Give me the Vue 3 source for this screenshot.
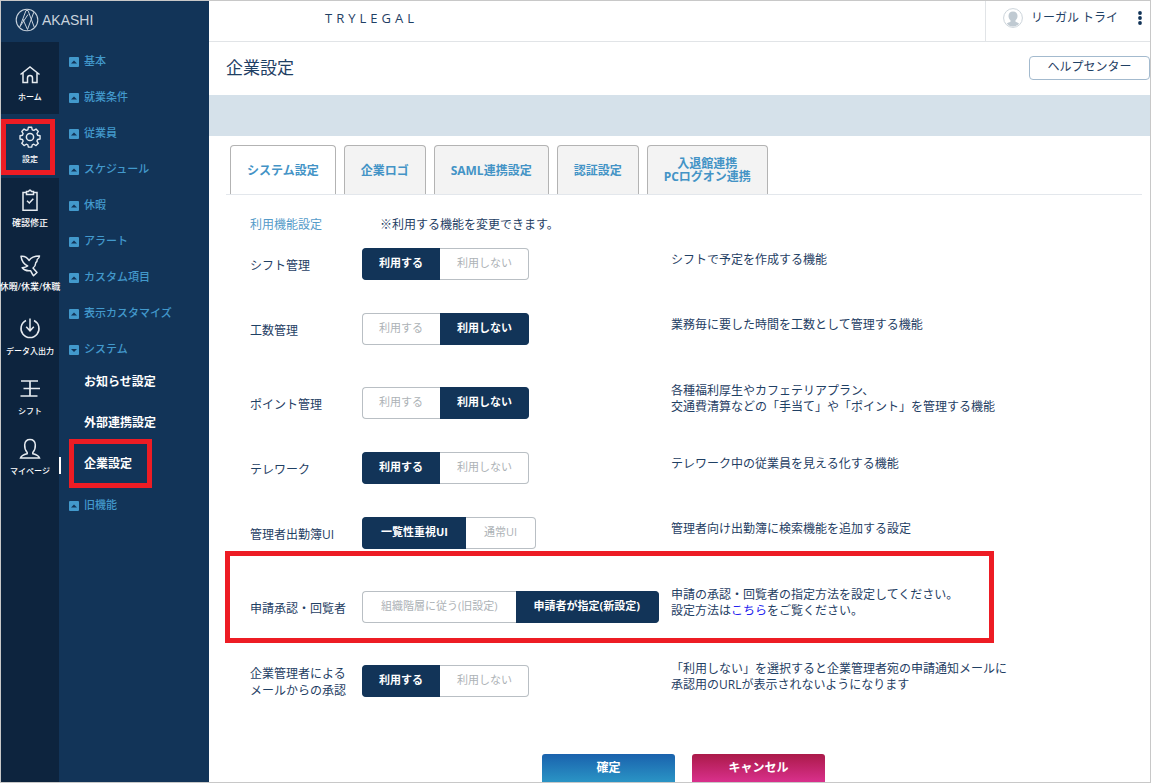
<script setup>
import { ref, reactive } from 'vue'

const rail = [
  { id: 'home', label: 'ホーム' },
  { id: 'gear', label: '設定', active: true },
  { id: 'check', label: '確認修正', wide: true },
  { id: 'bird', label: '休暇/休業/休職', wide: true },
  { id: 'data', label: 'データ入出力', compact: true },
  { id: 'shift', label: 'シフト', compact: true },
  { id: 'person', label: 'マイページ', compact: true },
]

const menu = [
  { label: '基本' },
  { label: '就業条件' },
  { label: '従業員' },
  { label: 'スケジュール' },
  { label: '休暇' },
  { label: 'アラート' },
  { label: 'カスタム項目' },
  { label: '表示カスタマイズ' },
  { label: 'システム', children: ['お知らせ設定', '外部連携設定', '企業設定'] },
  { label: '旧機能' },
]

const tabs = [['システム設定'], ['企業ロゴ'], ['SAML連携設定'], ['認証設定'], ['入退館連携', 'PCログオン連携']]
const currentTab = ref(0)

const rows = reactive([
  { label: ['シフト管理'], options: ['利用する', '利用しない'], value: 0, desc: ['シフトで予定を作成する機能'] },
  { label: ['工数管理'], options: ['利用する', '利用しない'], value: 1, desc: ['業務毎に要した時間を工数として管理する機能'], tall: true },
  { label: ['ポイント管理'], options: ['利用する', '利用しない'], value: 1, desc: ['各種福利厚生やカフェテリアプラン、', '交通費清算などの「手当て」や「ポイント」を管理する機能'] },
  { label: ['テレワーク'], options: ['利用する', '利用しない'], value: 0, desc: ['テレワーク中の従業員を見える化する機能'] },
  { label: ['管理者出勤簿UI'], options: ['一覧性重視UI', '通常UI'], value: 0, desc: ['管理者向け出勤簿に検索機能を追加する設定'], tall: true, roomy: true },
  { label: ['申請承認・回覧者'], options: ['組織階層に従う(旧設定)', '申請者が指定(新設定)'], value: 1, desc: ['申請の承認・回覧者の指定方法を設定してください。'], link: true, tall: true, roomy: true, marked: true },
  { label: ['企業管理者による', 'メールからの承認'], options: ['利用する', '利用しない'], value: 0, desc: ['「利用しない」を選択すると企業管理者宛の申請通知メールに', '承認用のURLが表示されないようになります'] },
])
</script>

<template>
  <div class="app">
    <aside class="side">
      <a class="brand" href="#">
        <svg width="24" height="24" viewBox="0 0 24 24" fill="none" stroke="#c9d3dd" stroke-width="1.1">
          <circle cx="12" cy="12" r="10.8" />
          <path d="M4.500 19.800 11 2.500h2l6.500 17.300M7.800 11l4.700 10.500 6.300-17.300M5 18.500l8-12" stroke-width="1" />
        </svg>
        <span>AKASHI</span>
      </a>
      <div class="navs">
        <nav class="rail">
          <a v-for="r in rail" :key="r.id" href="#" class="rail-item" :class="[r.id, { active: r.active, compact: r.compact, wide: r.wide }]">
            <svg width="24" height="24" viewBox="0 0 24 24" fill="none" stroke="#e6ebf0" stroke-width="1.5">
              <path v-if="r.id === 'home'" d="M2.500 11.500 12 4l9.500 7.500M5 10v9.500h4.500V15a2.500 2.500 0 0 1 5 0v4.500H19V10" />
              <template v-else-if="r.id === 'gear'">
                <path d="M10.200 2.500h3.600l.6 2.700 1.700.7 2.400-1.500 2.500 2.600-1.500 2.300.7 1.800 2.700.6v3.500l-2.700.6-.7 1.700 1.500 2.400-2.500 2.500-2.400-1.500-1.700.7-.6 2.400h-3.600l-.6-2.400-1.700-.7-2.400 1.500L3 19.900l1.500-2.400-.7-1.700-2.700-.6v-3.500l2.700-.6.7-1.800L3 7l2.500-2.600 2.400 1.500 1.700-.7z" transform="translate(1 0) scale(.92)" stroke-linejoin="round" />
                <circle cx="12" cy="12" r="3.600" />
              </template>
              <template v-else-if="r.id === 'check'">
                <path d="M8.500 3.500H5v17.800h14V3.500h-3.500" /><path d="M8.500 5.500V2.500h2L11.500 1.200h1l1 1.300h2v3zM9 11.800l2.300 2.200 4-4.300" />
              </template>
              <path v-else-if="r.id === 'bird'" d="M3 3.200c4.500-.4 6.500 1.300 8 4.300 1.800-2.800 4.800-4.500 10.500-4.500-.3 2-1 2.700-2.200 3.300 0 1.700-.6 2.700-1.500 3.400-.2 2.500-1 4-2.800 5.300l4 4.500-3.500 3.200c-1.300-1.300-2-3.500-3-5-3.700.5-6.500-.7-8.300-3 2-.1 4.200-.6 5.500-1.700C6.500 11.500 3.500 7.500 3 3.200z" stroke-linejoin="round" />
              <path v-else-if="r.id === 'data'" d="M8 3.500a9 9 0 1 0 8 0M12 1.500v12M8.200 9.800l3.800 4 3.800-4" />
              <path v-else-if="r.id === 'shift'" d="M3 4h17M5.500 11.500H22M2.500 19h17M12 4v15" stroke-width="1.700" />
              <path v-else d="M9.200 15.500C7.300 13.500 6.500 11 6.700 7.800 7 4.500 9 2.500 12 2.500s5 2 5.300 5.300c.2 3.200-.6 5.700-2.500 7.700v1.200c2.500.6 5.700 1.300 6.700 4.300h-19c1-3 4.200-3.700 6.700-4.300z" />
            </svg>
            <span>{{ r.label }}</span>
            <i v-if="r.active" class="mark mark-rail"></i>
          </a>
        </nav>
        <nav class="menu">
          <ul>
            <li v-for="m in menu" :key="m.label">
              <a href="#" class="menu-link">
                <svg width="10" height="10" viewBox="0 0 10 10">
                  <rect width="10" height="10" rx="1" fill="#4299cc" />
                  <path :d="m.children ? 'M2 4h6L5 7z' : 'M2 6.500h6L5 3.500z'" fill="#123458" />
                </svg>
                {{ m.label }}
              </a>
              <ul v-if="m.children" class="sub">
                <li v-for="c in m.children" :key="c" :class="{ current: c === '企業設定' }">
                  <a href="#">{{ c }}</a>
                  <i v-if="c === '企業設定'" class="mark mark-menu"></i>
                </li>
              </ul>
            </li>
          </ul>
        </nav>
      </div>
    </aside>

    <main class="main">
      <header class="top">
        <span class="company">TRYLEGAL</span>
        <div class="user">
          <svg width="20" height="20" viewBox="0 0 20 20">
            <circle cx="10" cy="10" r="9.400" fill="#fff" stroke="#ccd4da" />
            <path d="M10 3.500c-2.900 0-4.500 1.900-4.500 4.500 0 1.900.8 3.400 2 4.300v1.400c-1.300.6-2.700.9-3.700 2A8.500 8.500 0 0 0 10 18.500a8.500 8.500 0 0 0 6.200-2.800c-1-1.100-2.400-1.400-3.700-2v-1.400c1.200-.9 2-2.400 2-4.300 0-2.600-1.600-4.500-4.500-4.500z" fill="#c0cad2" />
          </svg>
          <span class="name">リーガル トライ</span>
          <button class="more" aria-label="メニュー">
            <svg width="4" height="16" viewBox="0 0 4 16" fill="#123458"><circle cx="2" cy="3" r="1.900" /><circle cx="2" cy="8" r="1.900" /><circle cx="2" cy="13" r="1.900" /></svg>
          </button>
        </div>
      </header>
      <div class="title">
        <h1>企業設定</h1>
        <button class="help">ヘルプセンター</button>
      </div>
      <div class="band"></div>
      <div class="tabs" role="tablist">
        <button v-for="(t, i) in tabs" :key="i" role="tab" :aria-selected="currentTab === i" :class="{ on: currentTab === i }" @click="currentTab = i">
          <span v-for="l in t" :key="l">{{ l }}</span>
        </button>
      </div>
      <section class="settings">
        <div class="intro">
          <h2>利用機能設定</h2>
          <p>※利用する機能を変更できます。</p>
        </div>
        <div v-for="(row, n) in rows" :key="n" class="row" :class="{ tall: row.tall, roomy: row.roomy }">
          <div :id="'label-' + n" class="label"><span v-for="l in row.label" :key="l">{{ l }}</span></div>
          <div class="seg" role="group" :aria-labelledby="'label-' + n">
            <button v-for="(o, i) in row.options" :key="o" :aria-pressed="row.value === i" :class="{ on: row.value === i }" @click="row.value = i">{{ o }}</button>
          </div>
          <div class="desc">
            <span v-for="d in row.desc" :key="d">{{ d }}</span>
            <span v-if="row.link">設定方法は<a href="#">こちら</a>をご覧ください。</span>
          </div>
          <i v-if="row.marked" class="mark mark-row"></i>
        </div>
      </section>
      <div class="actions">
        <button class="ok">確定</button>
        <button class="cancel">キャンセル</button>
      </div>
    </main>
  </div>
</template>

<style>
body { margin: 0; }
</style>

<style scoped>
* { box-sizing: border-box; }
.app {
  display: flex;
  min-height: 100vh;
  border: 1px solid #c8c8c8;
  background: #fff;
  color: #1f4064;
  font: 12px/16px "Open Sans", "Noto Sans CJK JP", sans-serif;
}
button { margin: 0; padding: 0; font: inherit; color: inherit; cursor: pointer; }
a { color: inherit; text-decoration: none; }
ul { list-style: none; margin: 0; padding: 0; }
h1, h2, p { margin: 0; font-weight: 400; }
.mark { position: absolute; border: 5px solid #ed1c24; pointer-events: none; }

.side { display: flex; flex-direction: column; flex: none; width: 208px; background: #123458; }
.brand {
  display: flex; align-items: center; gap: 3px; height: 41px; padding: 0 14px 3px;
  color: #c9d3dd; font: 14px/20px "Liberation Sans", sans-serif;
}
.navs { display: flex; flex: 1; }
.rail { flex: none; width: 58px; background: #0d243e; }
.rail-item {
  position: relative; display: flex; flex-direction: column; align-items: center; gap: 4px;
  height: 64px; padding-top: 11px; color: #fff; font-size: 8px; line-height: 12px; font-weight: 500; white-space: nowrap;
}
.rail-item svg { flex: none; }
.rail-item.home { height: 72px; padding-top: 21px; }
.rail-item.compact { height: 60px; }
.rail-item.wide { font-size: 9px; }
.rail-item.active { background: #123458; }
.mark-rail { top: 5px; left: 0; width: 54px; height: 56px; }

.menu { flex: 1; padding: 11px 0 0 10px; color: #4299cc; font-size: 11px; font-weight: 500; }
.menu > ul { display: flex; flex-direction: column; gap: 20px; }
.menu-link { display: flex; align-items: center; gap: 5px; }
.menu-link svg { margin-top: 2px; }
.sub { display: flex; flex-direction: column; gap: 25px; padding: 17px 0 5px 15px; color: #fff; font-size: 12px; font-weight: 700; }
.sub li { position: relative; }
.current::before { content: ""; position: absolute; left: -25px; top: 1px; width: 2px; height: 17px; background: #fff; }
.mark-menu { top: -17px; left: -15px; width: 83px; height: 49px; }

.main { flex: 1; min-width: 0; }
.top { display: flex; justify-content: space-between; height: 41px; border-bottom: 1px solid #e1e4e7; }
.company { padding: 9px 0 0 116px; font-size: 13px; letter-spacing: 4px; }
.user { display: flex; align-items: center; gap: 8px; padding: 0 8px 6px 17px; border-left: 1px solid #e1e4e7; }
.more { display: flex; margin-left: 12px; border: 0; background: none; }
.title { display: flex; align-items: center; justify-content: space-between; height: 53px; padding: 0 0 1px 17px; }
h1 { font-size: 17px; line-height: 24px; }
.help { width: 121px; height: 24px; padding-bottom: 2px; border: 1px solid #a3bace; border-radius: 4px; background: #fff; }
.band { height: 41px; background: #d5e1ea; }
.tabs { display: flex; gap: 8px; margin: 9px 8px 0 17px; padding-left: 4px; border-bottom: 1px solid #e3e7ec; }
.tabs button {
  display: flex; flex-direction: column; align-items: center; justify-content: center; height: 49px; padding: 0 16px;
  border: 1px solid #b3b3b3; border-bottom: 0; border-radius: 4px 4px 0 0; background: #f3f3f3;
  color: #4393c6; font-weight: 700; line-height: 13px; white-space: nowrap;
}
.tabs button.on { background: #fff; }
.settings { padding: 21px 0 0 41px; }
.intro, .row { display: grid; grid-template-columns: 112px 309px 1fr; align-items: start; }
.intro { margin-bottom: 14px; line-height: 18px; }
.intro h2 { color: #559bc9; font-size: 12px; }
.intro p { padding-left: 18px; }
.row { position: relative; min-height: 65px; white-space: nowrap; }
.row.tall { min-height: 74px; }
.label, .desc { display: flex; flex-direction: column; justify-content: center; }
.label { height: 34px; line-height: 17px; }
.desc { height: 24px; }
.desc a { color: #2222ee; }
.seg { display: flex; }
.seg button {
  height: 32px; padding: 0 16px 2px; border: 1px solid #b9bfc4; background: #fff; color: #adb2b6; font-size: 11px;
}
.seg button:first-child { border-right: 0; border-radius: 4px 0 0 4px; padding-right: 17px; }
.seg button:last-child { border-left: 0; border-radius: 0 4px 4px 0; padding-left: 17px; }
.roomy .seg button { padding-left: 18px; padding-right: 18px; }
.seg button.on { border-color: #123458; background: #123458; color: #fff; font-weight: 700; }
.mark-row { top: -40px; left: -25px; width: 769px; height: 92px; }
.actions { display: flex; justify-content: center; gap: 17px; padding: 24px 0 0 8px; }
.actions button { width: 133px; height: 28px; border: 0; border-radius: 3px 3px 0 0; color: #fff; font-weight: 700; }
.ok { background: linear-gradient(#1a62ad, #2a94c5); }
.cancel { background: linear-gradient(#ab1a49, #d9308c); }
</style>
